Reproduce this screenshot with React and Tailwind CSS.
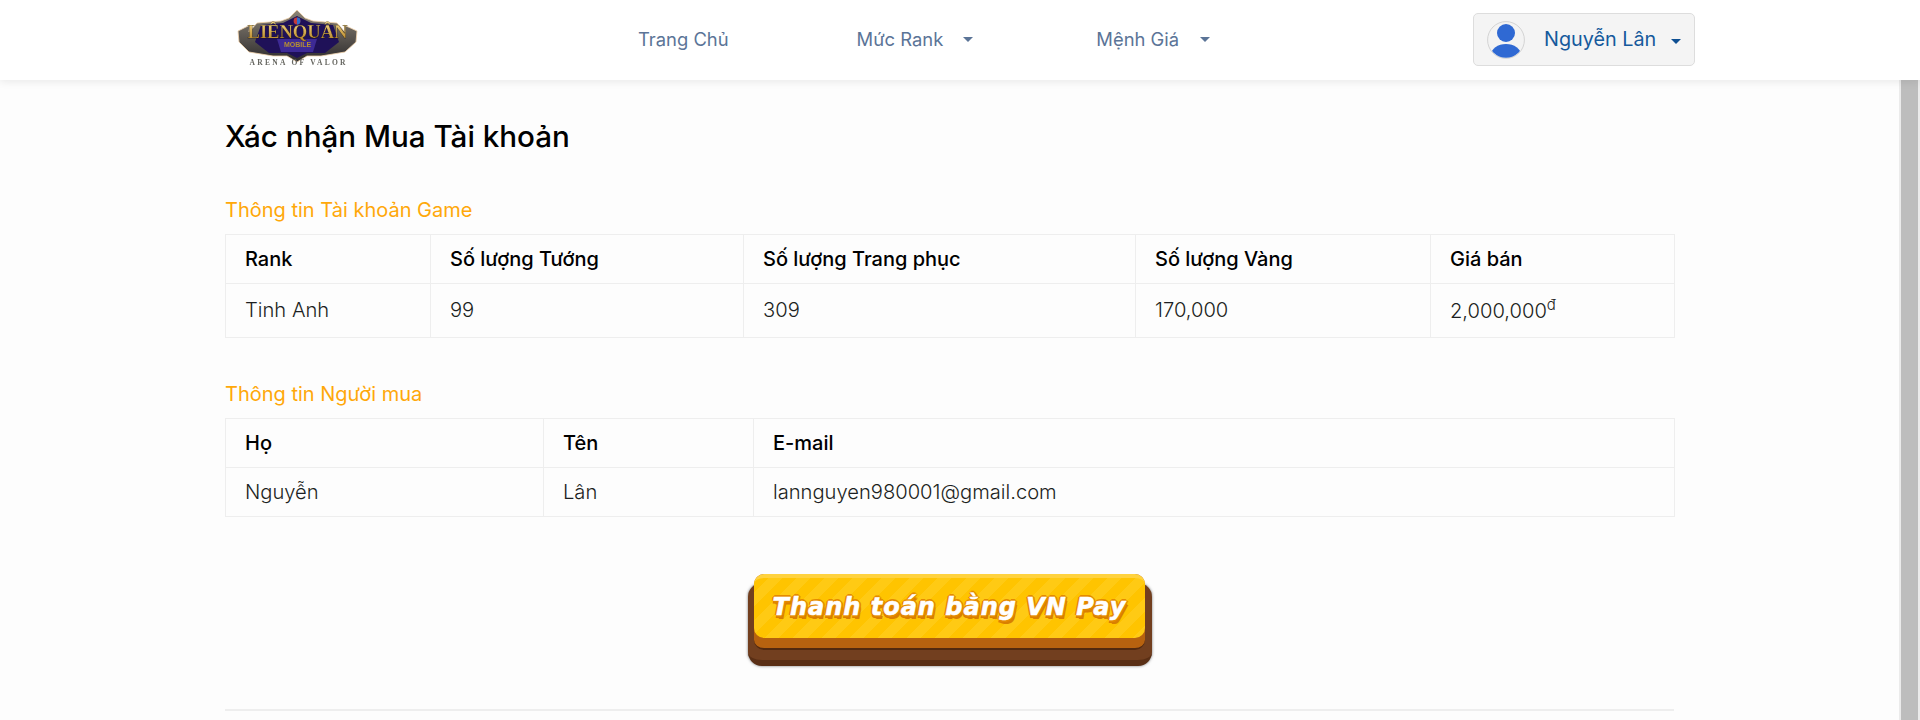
import React from "react";

function Logo() {
  return (
    <svg width="122" height="60" viewBox="0 0 122 60" className="block blur-[0.4px]">
      <defs>
        <linearGradient id="lq" x1="0" y1="0" x2="0" y2="1">
          <stop offset="0" stopColor="#f7dc8c" />
          <stop offset="1" stopColor="#b07c1c" />
        </linearGradient>
        <linearGradient id="frame" x1="0" y1="0" x2="0" y2="1">
          <stop offset="0" stopColor="#8d8577" />
          <stop offset="1" stopColor="#2c2a2c" />
        </linearGradient>
      </defs>
      <path d="M1 23 L13 17 L12 24 L20 15 L44 13 L52 10 L60 2 L68 10 L76 13 L100 15 L108 24 L107 17 L120 23 L119 34 L108 44 L84 48 L70 48 L60 54 L50 48 L36 48 L12 44 L2 34 Z" fill="url(#frame)" stroke="#f1d3ac" strokeWidth="0.8" />
      <path d="M24 17 L46 15 L60 8 L74 15 L96 17 L102 34 L88 45 L70 45 L60 50 L50 45 L32 45 L18 34 Z" fill="#1f1158" />
      <path d="M40 31 L80 31 L76 44 L44 44 Z" fill="#3d2a95" />
      <circle cx="60" cy="13" r="3.4" fill="#c23b3b" />
      <path d="M60 9.6 A3.4 3.4 0 0 1 60 16.4 Z" fill="#2e6fd0" />
      <text x="60.5" y="30" textAnchor="middle" fontFamily="'Liberation Serif', serif" fontWeight="700" fontSize="18" textLength="100" lengthAdjust="spacingAndGlyphs" fill="url(#lq)" stroke="#140e06" strokeWidth="0.25">LIÊNQUÂN</text>
      <text x="60.5" y="38.5" textAnchor="middle" fontFamily="'Liberation Sans', sans-serif" fontWeight="700" fontSize="7" fill="#b58f32">MOBILE</text>
      <text x="60.5" y="57" textAnchor="middle" fontFamily="'Liberation Serif', serif" fontWeight="700" fontSize="7.5" textLength="96" fill="#666660">ARENA OF VALOR</text>
    </svg>
  );
}

function Caret({ className }) {
  return <span className={`inline-block w-0 h-0 border-x-[5.5px] border-x-transparent border-t-[5.5px] ${className}`} />;
}

function Avatar() {
  return (
    <svg width="38" height="38" viewBox="0 0 38 38" className="block">
      <defs>
        <clipPath id="av"><circle cx="19" cy="19" r="17.8" /></clipPath>
      </defs>
      <circle cx="19" cy="19" r="18.4" fill="#f3f3f3" stroke="#d3d3d3" strokeWidth="1" />
      <circle cx="19" cy="12" r="9" fill="#2f69d3" />
      <ellipse cx="19" cy="34" rx="15" ry="11" fill="#2f69d3" clipPath="url(#av)" />
    </svg>
  );
}

function Table({ cols, head, row, bodyClass }) {
  return (
    <table className="w-full table-fixed border-collapse text-[20px]">
      <colgroup>
        {cols.map((c, i) => (
          <col key={i} style={{ width: c }} />
        ))}
      </colgroup>
      <thead>
        <tr className="h-[49px]">
          {head.map((h) => (
            <th key={h} className="border border-[#eeeeee] px-[19px] text-left font-[450] text-black align-middle">
              {h}
            </th>
          ))}
        </tr>
      </thead>
      <tbody>
        <tr className={bodyClass}>
          {row.map((r, i) => (
            <td key={i} className="border border-[#eeeeee] px-[19px] text-[20.15px] font-light text-[#1c1f22] align-middle">
              {r}
            </td>
          ))}
        </tr>
      </tbody>
    </table>
  );
}

export default function App() {
  return (
    <div className="h-[720px] overflow-hidden bg-[#fdfdfd] font-['Inter',sans-serif] relative">
      <header className="relative z-10 h-[80px] bg-white shadow-[0_2px_8px_rgba(0,0,0,0.08)] flex items-center pl-[237px]">
        <div className="w-[122px] mt-[-4px]">
          <Logo />
        </div>
        <nav className="flex items-center text-[18.4px] text-[#5b7497] ml-[279px]">
          <span>Trang Chủ</span>
          <span className="ml-[128px]">Mức Rank</span>
          <Caret className="ml-[20px] border-t-[#5b7497]" />
          <span className="ml-[123px]">Mệnh Giá</span>
          <Caret className="ml-[21px] border-t-[#5b7497]" />
        </nav>
        <button className="ml-[263px] h-[53px] w-[222px] mt-[-1px] rounded-[5px] border border-[#dddddd] bg-[#f4f4f4] flex items-center pl-[13px]">
          <Avatar />
          <span className="ml-[19px] text-[19.8px] text-[#165a9c]">Nguyễn Lân</span>
          <Caret className="ml-[15px] mt-[3px] border-t-[#0e4f92]" />
        </button>
      </header>

      <div className="absolute right-0 top-[80px] bottom-0 w-[21px] bg-[#ebebeb] px-[2px]">
        <div className="h-full bg-[#bdbdbd]" />
      </div>

      <main className="w-[1449px] ml-[225px]">
        <h1 className="mt-[35px] text-[29.6px] leading-[42px] font-[450] text-black">Xác nhận Mua Tài khoản</h1>
        <h2 className="mt-[39px] mb-[10px] text-[20px] leading-[28px] text-[#ffa80a]">Thông tin Tài khoản Game</h2>
        <Table
          cols={["205px", "313px", "392px", "295px", "244px"]}
          head={["Rank", "Số lượng Tướng", "Số lượng Trang phục", "Số lượng Vàng", "Giá bán"]}
          row={[
            "Tinh Anh",
            "99",
            "309",
            "170,000",
            <span key="p" className="relative top-[1px]">
              2,000,000<sup className="text-[15px] top-[-8px]">đ</sup>
            </span>,
          ]}
          bodyClass="h-[54px]"
        />
        <h2 className="mt-[42px] mb-[10px] text-[20px] leading-[28px] text-[#ffa80a]">Thông tin Người mua</h2>
        <Table
          cols={["318px", "210px", "921px"]}
          head={["Họ", "Tên", "E-mail"]}
          row={["Nguyễn", "Lân", "lannguyen980001@gmail.com"]}
          bodyClass="h-[49px]"
        />
        <div className="mt-[57px] flex justify-center">
          <button className="relative block w-[404px] h-[92px] mr-[-1px]">
            <span className="absolute left-0 right-0 top-[9px] bottom-0 rounded-[14px] bg-[#723f1f] border-b-[6px] border-[#5a2f15] shadow-[0_0_3px_rgba(0,0,0,0.55)]" />
            <span className="absolute left-[6px] right-[7px] top-0 h-[76px] rounded-[10px] bg-[#b7620f] border-b-[2px] border-[#52290f]" />
            <span className="absolute left-[6px] right-[7px] top-0 h-[64px] rounded-[10px] border-t-[4px] border-[#ffd23f] bg-[repeating-linear-gradient(135deg,#ffc400_0px,#ffc400_10px,#ffca14_10px,#ffca14_20px)] flex items-center justify-center">
              <span className="font-['DejaVu_Sans',sans-serif] italic font-bold text-[24px] tracking-[1px] mt-[-2px] text-white [-webkit-text-stroke:0.6px_white] [text-shadow:-2px_0_0_#e58a00,2px_0_0_#e58a00,0_-2px_0_#e58a00,0_2px_0_#e58a00,-1px_-1px_0_#e58a00,1px_-1px_0_#e58a00,1px_3px_0_#d97f00,2px_4px_0_#d97f00,-1px_3px_0_#d97f00]">
                Thanh toán bằng VN Pay
              </span>
            </span>
          </button>
        </div>
        <div className="mt-[43px] h-[2px] bg-[#eeeeee]" />
      </main>
    </div>
  );
}
